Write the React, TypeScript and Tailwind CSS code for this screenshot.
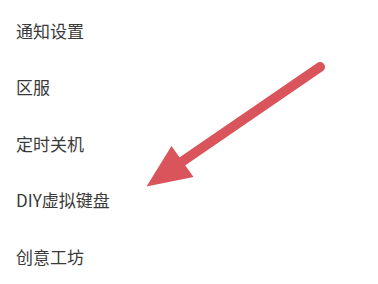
import React from 'react';

const items = ['通知设置', '区服', '定时关机', 'DIY虚拟键盘', '创意工坊'];

const App: React.FC = () => {
  return (
    <div className="relative w-[378px] h-[284px] overflow-hidden bg-white">
      <ul
        className="pt-[2px]"
        style={{ fontFamily: '"Noto Sans CJK SC", "Noto Sans", sans-serif' }}
      >
        {items.map((label) => (
          <li
            key={label}
            className="h-[56.5px] flex items-center pl-[16px] text-[17px] text-[#3a3a3a]"
          >
            {label}
          </li>
        ))}
      </ul>

      {/* Red annotation arrow */}
      <svg
        className="absolute inset-0 pointer-events-none"
        width="378"
        height="284"
        viewBox="0 0 378 284"
      >
        <line
          x1="320"
          y1="67"
          x2="180"
          y2="163"
          stroke="#d9545b"
          strokeWidth="10"
          strokeLinecap="round"
        />
        <polygon points="146.5,186.5 171.5,146 193.5,177" fill="#d9545b" />
      </svg>
    </div>
  );
};

export default App;
